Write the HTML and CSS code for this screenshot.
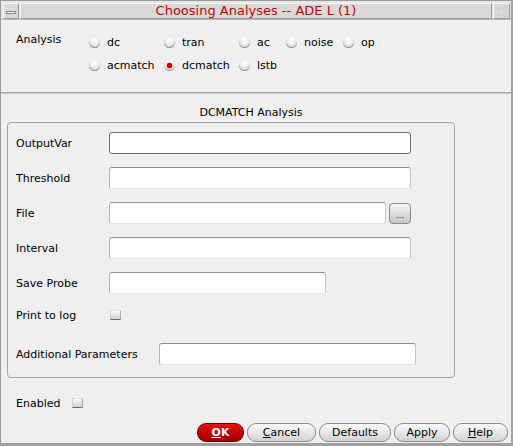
FILE: index.html
```html
<!DOCTYPE html>
<html>
<head>
<meta charset="utf-8">
<link rel="stylesheet" href="styles.css">
</head>
<body>
<div class="window">
  <div class="titlebar">
    <div class="tb-btn tb-min"><span class="min-icon"></span></div>
    <div class="tb-title">Choosing Analyses -- ADE L (1)</div>
    <div class="tb-btn tb-close">
      <svg width="11" height="11" viewBox="0 0 11 11"><polygon points="0.5,1.5 1.5,0.5 5.5,4 9.5,0.5 10.5,1.5 7,5.5 10.5,9.5 9.5,10.5 5.5,7 1.5,10.5 0.5,9.5 4,5.5" fill="#e4e4e4" stroke="#b4b4b4" stroke-width="1" stroke-dasharray="2 1"/></svg>
    </div>
  </div>

  <div class="analysis">
    <div class="analysis-label">Analysis</div>
    <div class="radio-grid">
      <div class="radio"><span class="dot"></span>dc</div>
      <div class="radio"><span class="dot"></span>tran</div>
      <div class="radio"><span class="dot"></span>ac</div>
      <div class="radio"><span class="dot"></span>noise</div>
      <div class="radio"><span class="dot"></span>op</div>
      <div class="radio"><span class="dot"></span>acmatch</div>
      <div class="radio"><span class="dot checked"></span>dcmatch</div>
      <div class="radio"><span class="dot"></span>lstb</div>
    </div>
  </div>

  <div class="section-title">DCMATCH Analysis</div>

  <div class="group">
    <div class="row"><span class="lbl">OutputVar</span><span class="field focus w-full"></span></div>
    <div class="row"><span class="lbl">Threshold</span><span class="field w-full"></span></div>
    <div class="row"><span class="lbl">File</span><span class="field w-file"></span><span class="browse">...</span></div>
    <div class="row"><span class="lbl">Interval</span><span class="field w-full"></span></div>
    <div class="row"><span class="lbl">Save Probe</span><span class="field w-probe"></span></div>
    <div class="row row-log"><span class="lbl">Print to log</span><span class="check"></span></div>
    <div class="row row-add"><span class="lbl lbl-wide">Additional Parameters</span><span class="field w-add"></span></div>
  </div>

  <div class="enabled-row"><span class="lbl-en">Enabled</span><span class="check"></span></div>

  <div class="buttons">
    <div class="btn btn-ok"><u>O</u>K</div>
    <div class="btn btn-cancel"><u>C</u>ancel</div>
    <div class="btn btn-defaults">Defaults</div>
    <div class="btn btn-apply">Apply</div>
    <div class="btn btn-help"><u>H</u>elp</div>
  </div>
</div>
</body>
</html>
```

FILE: styles.css
```css
html, body {
  margin: 0;
  padding: 0;
  background: #efefef;
}
body {
  font-family: "DejaVu Sans", sans-serif;
  font-size: 11px;
  color: #000;
}
.window {
  width: 513px;
  height: 446px;
  box-sizing: border-box;
  border-left: 1px solid #9c9c9c;
  border-top: 1px solid #9c9c9c;
  border-right: 2px solid #a4a4a4;
  border-bottom: 3px solid #a0a0a0;
  background: #efefef;
  display: flex;
  flex-direction: column;
}
.titlebar {
  display: flex;
  gap: 1px;
  height: 19px;
  box-sizing: border-box;
  padding: 2px 1px 1px 2px;
  border-bottom: 1px solid #b8b8b8;
  background: #e6e6e6;
}
.tb-btn, .tb-title {
  box-sizing: border-box;
  height: 16px;
  background: #d9d9d9;
  border: 1px solid;
  border-color: #f4f4f4 #9a9a9a #9a9a9a #f4f4f4;
}
.tb-min {
  width: 16px;
  display: flex;
  align-items: center;
  justify-content: center;
}
.min-icon {
  width: 10px;
  height: 3px;
  box-sizing: border-box;
  border: 1px solid #8a8a8a;
  background: #f6f6f6;
  margin-top: 2px;
}
.tb-title {
  flex: 1;
  text-align: center;
  font-size: 13px;
  line-height: 14px;
  color: #cc0000;
}
.tb-close {
  width: 17px;
  display: flex;
  align-items: center;
  justify-content: center;
}
.analysis {
  display: flex;
  height: 73px;
  box-sizing: border-box;
  padding: 10px 0 0 15px;
  border-bottom: 1px solid #a8a8a8;
  box-shadow: 0 1px 0 #c8c8c8;
}
.analysis-label {
  width: 73px;
  line-height: 13px;
  margin-top: 3px;
}
.radio-grid {
  display: grid;
  grid-template-columns: 75px 75px 47px 57px auto;
  grid-auto-rows: 23px;
  align-items: center;
}
.radio {
  display: flex;
  align-items: center;
  gap: 7px;
  line-height: 13px;
  margin-top: 1px;
}
.dot {
  width: 11px;
  height: 11px;
  border-radius: 50%;
  background: radial-gradient(circle at 50% 30%, #ffffff 0, #f4f4f4 35%, #d4d4d4 70%, #8e8e8e 100%);
  box-shadow: inset 0 -1px 0 #9a9a9a;
}
.dot.checked {
  background:
    radial-gradient(circle at 50% 50%, #e00000 0, #c00000 2.5px, rgba(0,0,0,0) 3.2px),
    radial-gradient(circle at 50% 30%, #ffffff 0, #f4f4f4 35%, #d4d4d4 70%, #8e8e8e 100%);
}
.section-title {
  margin-top: 13px;
  width: 500px;
  text-align: center;
  line-height: 13px;
}
.group {
  margin: 3px 0 0 6px;
  width: 448px;
  box-sizing: border-box;
  border: 1px solid #a4a4a4;
  border-radius: 4px;
  padding: 9px 8px 12px 8px;
  display: flex;
  flex-direction: column;
  gap: 13px;
}
.row {
  display: flex;
  align-items: center;
  height: 22px;
}
.row-log {
  margin-top: -3px;
}
.row-add {
  margin-top: 4px;
}
.lbl {
  width: 93px;
  flex: none;
}
.lbl-wide {
  width: 143px;
}
.field {
  height: 22px;
  box-sizing: border-box;
  background: #fff;
  border: 1px solid;
  border-color: #8e8e8e #c4c4c4 #e4e4e4 #b4b4b4;
  border-radius: 3px;
}
.field.focus {
  border-color: #6e6e6e;
}
.w-full { width: 302px; }
.w-file { width: 277px; }
.w-probe { width: 217px; }
.w-add { width: 257px; }
.browse {
  margin-left: 3px;
  width: 22px;
  height: 21px;
  box-sizing: border-box;
  border: 1px solid #8a8a8a;
  border-radius: 4px;
  background: linear-gradient(#f8f8f8, #c2c2c2);
  font-size: 9px;
  line-height: 22px;
  text-align: center;
  color: #222;
}
.check {
  width: 11px;
  height: 10px;
  box-sizing: border-box;
  border: 1px solid;
  border-color: #e4e4e4 #b0b0b0 #6a6a6a #d0d0d0;
  background: linear-gradient(#f6f6f6, #d2d2d2);
  margin-left: 1px;
}
.enabled-row {
  display: flex;
  align-items: center;
  height: 22px;
  margin-top: 14px;
  padding-left: 15px;
}
.lbl-en {
  width: 55px;
}
.buttons {
  margin-top: auto;
  display: flex;
  justify-content: flex-end;
  gap: 3px;
  padding: 0 3px 1px 0;
}
.btn {
  height: 19px;
  box-sizing: border-box;
  border: 1px solid #8c8c8c;
  border-radius: 9px;
  background: linear-gradient(#fbfbfb, #e6e6e6 55%, #d0d0d0);
  text-align: center;
  line-height: 17px;
  font-size: 11px;
  color: #000;
}
.btn u {
  text-decoration: underline;
  text-underline-offset: 1px;
}
.btn-ok {
  width: 47px;
  border-color: #7a0000;
  background: linear-gradient(#e01818, #c00000 55%, #9a0000);
  color: #fff;
  font-weight: bold;
}
.btn-cancel { width: 69px; }
.btn-defaults { width: 72px; }
.btn-apply { width: 56px; }
.btn-help { width: 55px; }
```
